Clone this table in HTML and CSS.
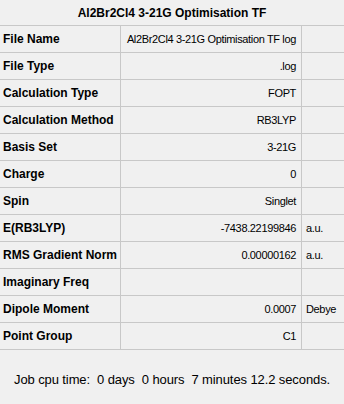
FILE: index.html
```html
<!DOCTYPE html>
<html>
<head>
<meta charset="utf-8">
<link rel="stylesheet" href="styles.css">
</head>
<body>
<div class="panel">
  <div class="title">Al2Br2Cl4 3-21G Optimisation TF</div>
  <div class="summary">
    <div class="label">File Name</div><div class="value">Al2Br2Cl4 3-21G Optimisation TF log</div><div class="unit"></div>
    <div class="label">File Type</div><div class="value">.log</div><div class="unit"></div>
    <div class="label">Calculation Type</div><div class="value">FOPT</div><div class="unit"></div>
    <div class="label">Calculation Method</div><div class="value">RB3LYP</div><div class="unit"></div>
    <div class="label">Basis Set</div><div class="value">3-21G</div><div class="unit"></div>
    <div class="label">Charge</div><div class="value">0</div><div class="unit"></div>
    <div class="label">Spin</div><div class="value">Singlet</div><div class="unit"></div>
    <div class="label">E(RB3LYP)</div><div class="value">-7438.22199846</div><div class="unit">a.u.</div>
    <div class="label">RMS Gradient Norm</div><div class="value">0.00000162</div><div class="unit">a.u.</div>
    <div class="label">Imaginary Freq</div><div class="value"></div><div class="unit"></div>
    <div class="label">Dipole Moment</div><div class="value">0.0007</div><div class="unit">Debye</div>
    <div class="label">Point Group</div><div class="value">C1</div><div class="unit"></div>
  </div>
  <div class="footer">Job cpu time:&nbsp;&nbsp;0 days&nbsp;&nbsp;0 hours&nbsp;&nbsp;7 minutes 12.2 seconds.</div>
</div>
</body>
</html>
```
FILE: styles.css
```css
html, body {
  margin: 0;
  padding: 0;
  background: #f0f0f0;
}

.panel {
  width: 344px;
  height: 404px;
  font-family: "Liberation Sans", Arial, sans-serif;
  font-size: 11px;
  color: #000;
  display: flex;
  flex-direction: column;
}

.title {
  height: 25px;
  display: flex;
  align-items: center;
  justify-content: center;
  font-weight: bold;
  font-size: 12px;
}

/* grid lines come from the background showing through 1px gaps */
.summary {
  display: grid;
  grid-template-columns: 120px 180px 42px;
  grid-auto-rows: 26px;
  gap: 1px;
  background: #c8c8c8;
  border-top: 1px solid #c8c8c8;
  border-bottom: 1px solid #c8c8c8;
}

.summary > div {
  background: #f0f0f0;
  display: flex;
  align-items: center;
  white-space: nowrap;
  overflow: hidden;
}

.label {
  font-weight: bold;
  font-size: 12px;
  padding-left: 3px;
}

.value,
.unit {
  letter-spacing: -0.35px;
}

.value {
  justify-content: flex-end;
  padding-right: 5px;
}

.unit {
  padding-left: 4px;
}

.footer {
  flex: 1;
  display: flex;
  align-items: center;
  padding: 4px 0 0 14px;
  font-size: 13px;
  letter-spacing: -0.1px;
}
```
